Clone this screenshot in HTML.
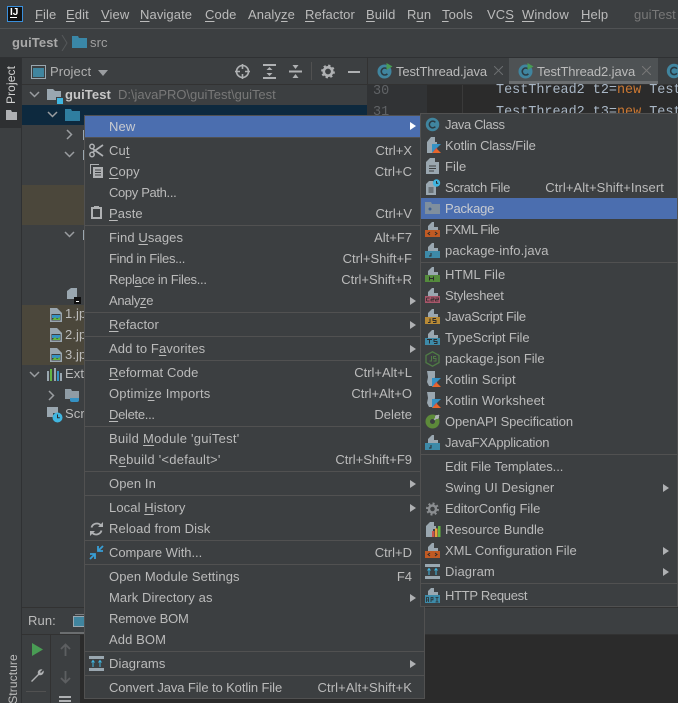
<!DOCTYPE html>
<html><head><meta charset="utf-8">
<style>
html,body{margin:0;padding:0;width:678px;height:703px;overflow:hidden;background:#3c3f41}
body{position:relative;font:13px/20px "Liberation Sans",sans-serif;color:#bbb}
div,span.a,svg{position:absolute}
.t{white-space:nowrap;height:20px;letter-spacing:.1px}
u{text-underline-offset:2px}
.s{left:0;right:0;height:1px;background:#515151}
.menu{background:#3c3f41;border:1px solid #515151;box-sizing:border-box;overflow:hidden}
.k{white-space:nowrap;height:20px;text-align:right;letter-spacing:0}
.ar{width:0;height:0;border-left:6px solid #afb1b3;border-top:4px solid transparent;border-bottom:4px solid transparent}
.v{color:#a9b7c6;font:13.45px/20px "Liberation Mono",monospace;white-space:pre}
.o{color:#cc7832}
.ln{color:#606366;font:13.45px/20px "Liberation Mono",monospace}
.b{font-weight:bold}
</style></head><body>
<svg width="0" height="0" style="position:absolute">
<defs>
<symbol id="cls" viewBox="0 0 16 16"><circle cx="8" cy="8" r="7.2" fill="#40859f"/><path d="M11 5.700A3.600 3.600 0 1 0 11 10.300" fill="none" stroke="#2b3a42" stroke-width="1.600"/></symbol>
<symbol id="tabc" viewBox="0 0 16 16"><circle cx="7.500" cy="8.500" r="7" fill="#40859f"/><path d="M10.400 6.200A3.500 3.500 0 1 0 10.400 10.800" fill="none" stroke="#2b3a42" stroke-width="1.600"/><path d="M9.500 0l6 3.500-6 3.500z" fill="#499c54"/></symbol>
<symbol id="img" viewBox="0 0 16 16"><path d="M2 1h7l5 5v9H2z" fill="#9aa7b0"/><rect x="3.500" y="7" width="9" height="6.500" fill="#3c3f41"/><path d="M4 8h8v3H4z" fill="#3592c4"/><path d="M4 13l3-3 2 2 3-2v3z" fill="#62b543"/></symbol>
<symbol id="kt" viewBox="0 0 9 9"><path d="M0 0h9L4.500 4.500 0 9z" fill="#3592c4"/><path d="M0 9l4.500-4.500L9 9z" fill="#e8662a"/><path d="M2 7l3-3" stroke="#c75450"/></symbol>
<symbol id="top" viewBox="0 0 15 15"><path d="M3 4l4-4h2v5h4v3H3z" fill="#9aa7b0"/></symbol>
</defs></svg>

<!-- top menu bar -->
<div style="left:0;top:28px;width:678px;height:1px;background:#505254"></div>
<div style="left:7px;top:6px;width:14px;height:14px;background:#111;border:1px solid #3a8fdc"></div>
<div class="b" style="left:10px;top:7px;font-size:10px;line-height:11px;color:#fff">IJ</div>
<div style="left:10px;top:17px;width:7px;height:1px;background:#fff"></div>
<div class="t" style="left:35px;top:5px"><u>F</u>ile</div>
<div class="t" style="left:66px;top:5px"><u>E</u>dit</div>
<div class="t" style="left:101px;top:5px"><u>V</u>iew</div>
<div class="t" style="left:140px;top:5px"><u>N</u>avigate</div>
<div class="t" style="left:205px;top:5px"><u>C</u>ode</div>
<div class="t" style="left:248px;top:5px">Analy<u>z</u>e</div>
<div class="t" style="left:305px;top:5px"><u>R</u>efactor</div>
<div class="t" style="left:366px;top:5px"><u>B</u>uild</div>
<div class="t" style="left:407px;top:5px">R<u>u</u>n</div>
<div class="t" style="left:442px;top:5px"><u>T</u>ools</div>
<div class="t" style="left:487px;top:5px">VC<u>S</u></div>
<div class="t" style="left:522px;top:5px"><u>W</u>indow</div>
<div class="t" style="left:581px;top:5px"><u>H</u>elp</div>
<div class="t" style="left:634px;top:5px;color:#787878">guiTest</div>

<!-- nav bar -->
<div class="t b" style="left:12px;top:33px;color:#a9a9a9">guiTest</div>
<svg style="left:61px;top:35px" width="8" height="16"><path d="M1 0l5 8-5 8" fill="none" stroke="#55585a"/></svg>
<svg style="left:72px;top:36px" width="15" height="13"><path d="M0 0h6l1 2h8v10H0z" fill="#3a87a7"/></svg>
<div class="t" style="left:90px;top:33px;color:#a0a0a0">src</div>
<div style="left:0;top:57px;width:678px;height:1px;background:#2f3133"></div>

<!-- left stripe -->
<div style="left:0;top:58px;width:22px;height:70px;background:#2e3032"></div>
<div style="left:21px;top:58px;width:1px;height:645px;background:#2f3133"></div>
<div class="t" style="left:-12px;top:75px;width:46px;text-align:center;transform:rotate(-90deg);color:#d0d0d0;font-size:12px">Project</div>
<svg style="left:6px;top:110px" width="12" height="10"><path d="M0 0h5l1 2h5v8H0z" fill="#afb1b3"/></svg>
<div class="t" style="left:-17px;top:669px;width:60px;text-align:center;transform:rotate(-90deg);font-size:12px;color:#bbb">Structure</div>

<!-- project header -->
<svg style="left:31px;top:65px" width="15" height="14"><rect x=".5" y=".5" width="14" height="13" fill="none" stroke="#9aa7b0"/><rect x="2" y="3" width="11" height="9" fill="#40859f"/></svg>
<div class="t" style="left:50px;top:62px;color:#b0b0b0">Project</div>
<svg style="left:98px;top:70px" width="10" height="6"><path d="M0 0h10L5 6z" fill="#9a9da0"/></svg>
<svg style="left:235px;top:64px" width="15" height="15"><circle cx="7.500" cy="7.500" r="6" fill="none" stroke="#afb1b3" stroke-width="1.600"/><path d="M7.500 0v5M7.500 10v5M0 7.500h5M10 7.500h5" stroke="#afb1b3" stroke-width="1.600"/></svg>
<svg style="left:263px;top:64px" width="13" height="15"><path d="M0 1h13M0 14h13" stroke="#afb1b3" stroke-width="2"/><path d="M6.500 3l3 3h-6zM6.500 12l3-3h-6z" fill="#afb1b3"/></svg>
<svg style="left:289px;top:64px" width="13" height="15"><path d="M0 7.500h13" stroke="#afb1b3" stroke-width="2"/><path d="M3.500 1h6l-3 4zM3.500 14h6l-3-4z" fill="#afb1b3"/></svg>
<div style="left:311px;top:62px;width:1px;height:18px;background:#515151"></div>
<svg style="left:321px;top:64px" width="14" height="15"><circle cx="7" cy="7.500" r="4.200" fill="none" stroke="#afb1b3" stroke-width="2.600"/><circle cx="7" cy="7.500" r="6" fill="none" stroke="#afb1b3" stroke-width="1.800" stroke-dasharray="2.300 2.400"/></svg>
<div style="left:348px;top:71px;width:12px;height:2px;background:#afb1b3"></div>
<div style="left:22px;top:84px;width:345px;height:1px;background:#323232"></div>
<div style="left:367px;top:58px;width:1px;height:27px;background:#323232"></div>

<!-- tabs -->
<div style="left:509px;top:58px;width:149px;height:27px;background:#4e5254"></div>
<div style="left:509px;top:81px;width:149px;height:3px;background:#6b6e70"></div>
<svg style="left:377px;top:63px" width="16" height="16"><use href="#tabc"/></svg>
<div class="t" style="left:396px;top:62px;letter-spacing:-.1px">TestThread.java</div>
<svg style="left:494px;top:66px" width="9" height="9"><path d="M0 0l9 9M9 0L0 9" stroke="#6b6e70"/></svg>
<svg style="left:518px;top:63px" width="16" height="16"><use href="#tabc"/></svg>
<div class="t" style="left:537px;top:62px;letter-spacing:-.1px">TestThread2.java</div>
<svg style="left:642px;top:66px" width="9" height="9"><path d="M0 0l9 9M9 0L0 9" stroke="#777"/></svg>
<svg style="left:666px;top:63px" width="16" height="16"><use href="#cls"/></svg>
<div style="left:367px;top:84px;width:311px;height:1px;background:#323232"></div>

<!-- editor -->
<div style="left:367px;top:85px;width:60px;height:30px;background:#313335"></div>
<div style="left:427px;top:85px;width:251px;height:30px;background:#2b2b2b"></div>
<div style="left:462px;top:85px;width:1px;height:30px;background:#3a3a3a"></div>
<div class="ln" style="left:373px;top:82px">30</div>
<div class="ln" style="left:373px;top:103px">31</div>
<div class="v" style="left:496px;top:81px">TestThread2 t2=<span class="o">new</span> Test</div>
<div class="v" style="left:496px;top:103px">TestThread2 t3=<span class="o">new</span> Test</div>

<!-- tree -->
<svg style="left:29px;top:91px" width="11" height="7"><path d="M1 1l4.500 4.500L10 1" fill="none" stroke="#9a9da0" stroke-width="1.500"/></svg>
<svg style="left:47px;top:89px" width="16" height="15"><path d="M0 0h6l2 2h6v9H0z" fill="#9aa7b0"/><rect x="9" y="8" width="7" height="7" fill="#3c3f41"/><rect x="10" y="9" width="6" height="6" fill="#40b6e0"/></svg>
<div class="t b" style="left:65px;top:85px;color:#c8c8c8">guiTest</div>
<div class="t" style="left:118px;top:85px;color:#787878;letter-spacing:-.02px">D:\javaPRO\guiTest\guiTest</div>

<div style="left:22px;top:105px;width:345px;height:20px;background:#0d293e"></div>
<svg style="left:47px;top:111px" width="11" height="7"><path d="M1 1l4.500 4.500L10 1" fill="none" stroke="#9a9da0" stroke-width="1.500"/></svg>
<svg style="left:65px;top:109px" width="15" height="12"><path d="M0 0h6l1 2h8v10H0z" fill="#2f7ea0"/></svg>

<svg style="left:66px;top:129px" width="7" height="11"><path d="M1 1l4.500 4.500L1 10" fill="none" stroke="#9a9da0" stroke-width="1.500"/></svg>
<svg style="left:64px;top:151px" width="11" height="7"><path d="M1 1l4.500 4.500L10 1" fill="none" stroke="#9a9da0" stroke-width="1.500"/></svg>
<svg style="left:64px;top:231px" width="11" height="7"><path d="M1 1l4.500 4.500L10 1" fill="none" stroke="#9a9da0" stroke-width="1.500"/></svg>
<div style="left:83px;top:130px;width:1px;height:10px;background:#9aa7b0"></div>
<div style="left:83px;top:150px;width:1px;height:10px;background:#9aa7b0"></div>
<div style="left:83px;top:230px;width:1px;height:10px;background:#9aa7b0"></div>

<div style="left:22px;top:185px;width:62px;height:40px;background:#4b473b"></div>
<div style="left:22px;top:305px;width:62px;height:60px;background:#4b473b"></div>

<svg style="left:67px;top:288px" width="14" height="16"><path d="M0 3l4-3h6v11H0z" fill="#9aa7b0"/><rect x="7" y="9" width="7" height="7" fill="#111"/><rect x="9" y="13" width="3" height="1" fill="#fff"/></svg>
<svg style="left:48px;top:307px" width="16" height="16"><use href="#img"/></svg>
<svg style="left:48px;top:327px" width="16" height="16"><use href="#img"/></svg>
<svg style="left:48px;top:347px" width="16" height="16"><use href="#img"/></svg>
<div class="t" style="left:65px;top:304px">1.jpg</div>
<div class="t" style="left:65px;top:325px">2.jpg</div>
<div class="t" style="left:65px;top:345px">3.jpg</div>
<svg style="left:29px;top:371px" width="11" height="7"><path d="M1 1l4.500 4.500L10 1" fill="none" stroke="#9a9da0" stroke-width="1.500"/></svg>
<svg style="left:47px;top:368px" width="15" height="13"><rect x="0" y="3" width="2" height="10" fill="#9aa7b0"/><rect x="3" y="1" width="2" height="12" fill="#62b543"/><rect x="7" y="0" width="2" height="13" fill="#9aa7b0"/><rect x="10" y="3" width="2" height="10" fill="#3592c4"/><rect x="13" y="5" width="2" height="8" fill="#9aa7b0"/></svg>
<div class="t" style="left:65px;top:364px">External Libraries</div>
<svg style="left:48px;top:390px" width="7" height="11"><path d="M1 1l4.500 4.500L1 10" fill="none" stroke="#9a9da0" stroke-width="1.500"/></svg>
<svg style="left:65px;top:389px" width="16" height="14"><path d="M0 0h6l1 2h7v8H0z" fill="#8f9ca5"/><path d="M5 9h9v2a2 2 0 0 1-2 2H7a2 2 0 0 1-2-2z" fill="#3592c4"/></svg>
<svg style="left:47px;top:407px" width="16" height="16"><path d="M0 0h11v6H6v4H0z" fill="#9aa7b0"/><circle cx="10.500" cy="10.500" r="5" fill="#40b6e0"/><path d="M10.500 7.500v3.300h2.300" fill="none" stroke="#2b2b2b"/></svg>
<div class="t" style="left:65px;top:404px">Scratches</div>

<!-- run panel -->
<div style="left:22px;top:607px;width:656px;height:1px;background:#323232"></div>
<div class="t" style="left:28px;top:611px">Run:</div>
<svg style="left:73px;top:614px" width="13" height="14"><path d="M2 0h9v1H2z" fill="#7a7d80"/><rect x=".5" y="2.500" width="11" height="10" fill="#40859f" stroke="#9aa7b0"/></svg>
<div style="left:60px;top:632px;width:26px;height:3px;background:#6b6e70"></div>
<div style="left:22px;top:634px;width:656px;height:1px;background:#323232"></div>
<div style="left:50px;top:635px;width:1px;height:68px;background:#323232"></div>
<div style="left:80px;top:635px;width:598px;height:68px;background:#2b2b2b"></div>
<svg style="left:32px;top:643px" width="11" height="13"><path d="M0 0l11 6.500L0 13z" fill="#499c54"/></svg>
<svg style="left:29px;top:668px" width="15" height="15"><path d="M2 13L9 6a3.500 3.500 0 0 1 4.500-4.500L11 4l1 1 2.500-2.500A3.500 3.500 0 0 1 10 7l-7 7z" fill="#afb1b3"/></svg>
<svg style="left:60px;top:643px" width="11" height="14"><path d="M5.500 13V2M1 6l4.500-4.500L10 6" fill="none" stroke="#5d5f61" stroke-width="1.800"/></svg>
<svg style="left:60px;top:670px" width="11" height="14"><path d="M5.500 1v11M1 8l4.500 4.500L10 8" fill="none" stroke="#5d5f61" stroke-width="1.800"/></svg>
<div style="left:26px;top:691px;width:20px;height:1px;background:#515151"></div>
<div style="left:59px;top:696px;width:12px;height:2px;background:#afb1b3"></div>
<div style="left:59px;top:700px;width:12px;height:2px;background:#afb1b3"></div>

<!-- main context menu -->
<div class="menu" style="left:84px;top:115px;width:341px;height:584px">
  <div style="left:0;top:0;width:339px;height:21px;background:#4b6eaf"></div>
</div>
<div style="left:85px;top:115px;width:339px;height:583px">
  <div class="t" style="left:24px;top:2px;color:#c8cbd0">New</div>
  <div class="ar" style="left:325px;top:7px;border-left-color:#fff"></div>
  <div class="s" style="top:22px"></div>
  <svg style="left:4px;top:28px" width="15" height="15"><path d="M4 6l10 7M4 9l10-7" stroke="#afb1b3" stroke-width="1.700"/><circle cx="3" cy="3.500" r="2.200" fill="none" stroke="#afb1b3" stroke-width="1.500"/><circle cx="3" cy="11.500" r="2.200" fill="none" stroke="#afb1b3" stroke-width="1.500"/></svg>
  <div class="t" style="left:24px;top:26px">Cu<u>t</u></div><div class="k" style="right:12px;top:26px">Ctrl+X</div>
  <svg style="left:5px;top:49px" width="13" height="14"><path d="M0 0h9v1H1v9H0z" fill="#afb1b3"/><rect x="3" y="3" width="10" height="11" fill="#afb1b3"/><path d="M5 6h6M5 8.500h6M5 11h6" stroke="#3c3f41"/></svg>
  <div class="t" style="left:24px;top:47px"><u>C</u>opy</div><div class="k" style="right:12px;top:47px">Ctrl+C</div>
  <div class="t" style="left:24px;top:68px;letter-spacing:-.35px">Copy Path...</div>
  <svg style="left:6px;top:91px" width="11" height="13"><rect x="1" y="2" width="9" height="10" fill="none" stroke="#afb1b3" stroke-width="2"/><rect x="3" y="0" width="5" height="3" fill="#afb1b3"/></svg>
  <div class="t" style="left:24px;top:89px"><u>P</u>aste</div><div class="k" style="right:12px;top:89px">Ctrl+V</div>
  <div class="s" style="top:110px"></div>
  <div class="t" style="left:24px;top:113px">Find <u>U</u>sages</div><div class="k" style="right:12px;top:113px">Alt+F7</div>
  <div class="t" style="left:24px;top:134px;letter-spacing:-.3px">Find in Files...</div><div class="k" style="right:12px;top:134px">Ctrl+Shift+F</div>
  <div class="t" style="left:24px;top:155px;letter-spacing:-.3px">Repl<u>a</u>ce in Files...</div><div class="k" style="right:12px;top:155px">Ctrl+Shift+R</div>
  <div class="t" style="left:24px;top:176px;letter-spacing:-.3px">Analy<u>z</u>e</div><div class="ar" style="left:325px;top:182px"></div>
  <div class="s" style="top:197px"></div>
  <div class="t" style="left:24px;top:200px"><u>R</u>efactor</div><div class="ar" style="left:325px;top:206px"></div>
  <div class="s" style="top:221px"></div>
  <div class="t" style="left:24px;top:224px">Add to F<u>a</u>vorites</div><div class="ar" style="left:325px;top:230px"></div>
  <div class="s" style="top:245px"></div>
  <div class="t" style="left:24px;top:248px"><u>R</u>eformat Code</div><div class="k" style="right:12px;top:248px">Ctrl+Alt+L</div>
  <div class="t" style="left:24px;top:269px;letter-spacing:.2px">Optimi<u>z</u>e Imports</div><div class="k" style="right:12px;top:269px">Ctrl+Alt+O</div>
  <div class="t" style="left:24px;top:290px;letter-spacing:-.3px"><u>D</u>elete...</div><div class="k" style="right:12px;top:290px">Delete</div>
  <div class="s" style="top:311px"></div>
  <div class="t" style="left:24px;top:314px;letter-spacing:.25px">Build <u>M</u>odule 'guiTest'</div>
  <div class="t" style="left:24px;top:335px;letter-spacing:.25px">R<u>e</u>build '&lt;default&gt;'</div><div class="k" style="right:12px;top:335px">Ctrl+Shift+F9</div>
  <div class="s" style="top:356px"></div>
  <div class="t" style="left:24px;top:359px">Open In</div><div class="ar" style="left:325px;top:365px"></div>
  <div class="s" style="top:380px"></div>
  <div class="t" style="left:24px;top:383px">Local <u>H</u>istory</div><div class="ar" style="left:325px;top:389px"></div>
  <svg style="left:5px;top:407px" width="13" height="14"><path d="M1.500 5.500A5.500 5.500 0 0 1 11 3.500M11.500 8.500A5.500 5.500 0 0 1 2 10.500" fill="none" stroke="#afb1b3" stroke-width="1.800"/><path d="M8 5h5V0zM5 9H0v5z" fill="#afb1b3"/></svg>
  <div class="t" style="left:24px;top:404px">Reload from Disk</div>
  <div class="s" style="top:425px"></div>
  <svg style="left:4px;top:430px" width="15" height="15"><path d="M9 1v5h5M9 6l5-5M6 14V9H1M6 9l-5 5" fill="none" stroke="#389fd6" stroke-width="1.800"/></svg>
  <div class="t" style="left:24px;top:428px;letter-spacing:-.05px">Compare With...</div><div class="k" style="right:12px;top:428px">Ctrl+D</div>
  <div class="s" style="top:449px"></div>
  <div class="t" style="left:24px;top:452px">Open Module Settings</div><div class="k" style="right:12px;top:452px">F4</div>
  <div class="t" style="left:24px;top:473px">Mark Directory as</div><div class="ar" style="left:325px;top:479px"></div>
  <div class="t" style="left:24px;top:494px;letter-spacing:-.2px">Remove BOM</div>
  <div class="t" style="left:24px;top:515px">Add BOM</div>
  <div class="s" style="top:536px"></div>
  <svg style="left:4px;top:541px" width="15" height="15"><path d="M0 0h15v3H0zM0 12h15v3H0z" fill="#9aa7b0"/><path d="M4 11V5M11 11V5M2.500 6.500L4 4.500l1.500 2M9.500 6.500L11 4.500l1.500 2" fill="none" stroke="#40b6e0"/></svg>
  <div class="t" style="left:24px;top:539px">Diagrams</div><div class="ar" style="left:325px;top:545px"></div>
  <div class="s" style="top:560px"></div>
  <div class="t" style="left:24px;top:563px;letter-spacing:-.1px">Convert Java File to Kotlin File</div><div class="k" style="right:12px;top:563px;letter-spacing:.1px">Ctrl+Alt+Shift+K</div>
</div>

<!-- submenu -->
<div class="menu" style="left:420px;top:113px;width:258px;height:494px"></div>
<div style="left:421px;top:198px;width:256px;height:21px;background:#4b6eaf"></div>
<div style="left:421px;top:114px;width:256px;height:492px">
  <svg style="left:4px;top:3px" width="15" height="15"><use href="#cls"/></svg>
  <div class="t" style="left:24px;top:1px;letter-spacing:-.4px">Java Class</div>
  <svg style="left:6px;top:23px" width="13" height="16"><path d="M0 5l4-5h4v5h2v3H6v8H0z" fill="#9aa7b0"/></svg>
  <svg style="left:11px;top:30px" width="9" height="9"><use href="#kt"/></svg>
  <div class="t" style="left:24px;top:22px;letter-spacing:-.15px">Kotlin Class/File</div>
  <svg style="left:5px;top:44px" width="13" height="16"><path d="M0 4l4-4h5v4h4v12H0z" fill="#9aa7b0"/><path d="M3 8h7M3 10.500h7M3 13h5" stroke="#3c3f41"/></svg>
  <div class="t" style="left:24px;top:43px">File</div>
  <svg style="left:5px;top:65px" width="15" height="16"><path d="M0 5l3-3h4v3h3v11H0z" fill="#9aa7b0"/><path d="M2.500 9h5M2.500 11h5M2.500 13h5" stroke="#3c3f41"/><circle cx="10.500" cy="4" r="3.700" fill="#40b6e0"/><path d="M10.500 2v2.200h1.800" fill="none" stroke="#2b2b2b"/></svg>
  <div class="t" style="left:24px;top:64px;letter-spacing:-.3px">Scratch File</div><div class="k" style="right:13px;top:64px;letter-spacing:.1px">Ctrl+Alt+Shift+Insert</div>
  <svg style="left:4px;top:88px" width="15" height="12"><path d="M0 0h6l1 2h8v10H0z" fill="#7f8f9e"/><circle cx="5" cy="7" r="1.500" fill="#3f5f8f"/></svg>
  <div class="t" style="left:24px;top:85px;color:#c8cbd0;letter-spacing:-.2px">Package</div>
  <svg style="left:4px;top:108px" width="15" height="15"><use href="#top"/><rect x="0" y="8" width="15" height="7" fill="#c05a24"/><path d="M5 10l-2 1.500L5 13M10 10l2 1.500L10 13" fill="none" stroke="#2b2b2b"/></svg>
  <div class="t" style="left:24px;top:106px;letter-spacing:-.5px">FXML File</div>
  <svg style="left:4px;top:129px" width="15" height="15"><use href="#top"/><rect x="0" y="8" width="15" height="7" fill="#3d8aa8"/><path d="M6 10v3H4" fill="none" stroke="#2b2b2b"/></svg>
  <div class="t" style="left:24px;top:127px">package-info.java</div>
  <div class="s" style="top:148px"></div>
  <svg style="left:4px;top:153px" width="15" height="15"><use href="#top"/><rect x="0" y="8" width="15" height="7" fill="#548b3c"/><path d="M4.500 9.500v4M8.500 9.500v4M4.500 11.500h4" stroke="#2b2b2b"/></svg>
  <div class="t" style="left:24px;top:151px">HTML File</div>
  <svg style="left:4px;top:174px" width="15" height="15"><use href="#top"/><rect x="0" y="8" width="15" height="7" fill="#a8566a"/><path d="M1.500 10h3M1.500 13h3M1.500 10v3M6 10h3v1.500H6V13h3M10.500 10h3v1.500h-3V13h3" fill="none" stroke="#2b2b2b" stroke-width=".8"/></svg>
  <div class="t" style="left:24px;top:172px;letter-spacing:-.2px">Stylesheet</div>
  <svg style="left:4px;top:195px" width="15" height="15"><use href="#top"/><rect x="0" y="8" width="15" height="7" fill="#b88a35"/><path d="M5 9.500v4H3M11 9.500H8v2h3v2H8" fill="none" stroke="#2b2b2b"/></svg>
  <div class="t" style="left:24px;top:193px;letter-spacing:-.3px">JavaScript File</div>
  <svg style="left:4px;top:216px" width="15" height="15"><use href="#top"/><rect x="0" y="8" width="15" height="7" fill="#3d8aa8"/><path d="M2 9.500h5M4.500 9.500v4M12 9.500H9v2h3v2H9" fill="none" stroke="#2b2b2b"/></svg>
  <div class="t" style="left:24px;top:214px;letter-spacing:-.1px">TypeScript File</div>
  <svg style="left:4px;top:237px" width="15" height="16"><path d="M7.500 .8l6.500 3.600v7.200l-6.500 3.600L1 11.600V4.400z" fill="none" stroke="#4f7b45" stroke-width="1.300"/><path d="M6.500 5v5l-2 0M11 5.500H8.500v2h2.500v2.500H8.500" fill="none" stroke="#4f7b45"/></svg>
  <div class="t" style="left:24px;top:235px;letter-spacing:-.1px">package.json File</div>
  <svg style="left:5px;top:257px" width="15" height="16"><path d="M1 0h8v6l-1 5 2 4H3l-2-4 1-5z" fill="#9aa7b0"/></svg>
  <svg style="left:11px;top:264px" width="9" height="9"><use href="#kt"/></svg>
  <div class="t" style="left:24px;top:256px">Kotlin Script</div>
  <svg style="left:5px;top:278px" width="15" height="16"><path d="M1 0h8v6l-1 5 2 4H3l-2-4 1-5z" fill="#9aa7b0"/></svg>
  <svg style="left:11px;top:285px" width="9" height="9"><use href="#kt"/></svg>
  <div class="t" style="left:24px;top:277px">Kotlin Worksheet</div>
  <svg style="left:4px;top:300px" width="15" height="15"><circle cx="7.500" cy="7.500" r="7" fill="#5d8a3a"/><path d="M7.500 7.500L14 1" stroke="#b0b4b8" stroke-width="1.500"/><circle cx="7.500" cy="7.500" r="2.500" fill="#3c3f41"/><circle cx="12" cy="3" r="2" fill="#b0b4b8"/></svg>
  <div class="t" style="left:24px;top:298px;letter-spacing:-.1px">OpenAPI Specification</div>
  <svg style="left:4px;top:321px" width="15" height="15"><use href="#top"/><rect x="0" y="8" width="15" height="7" fill="#3d8aa8"/><path d="M6 10v3H4" fill="none" stroke="#2b2b2b"/></svg>
  <div class="t" style="left:24px;top:319px;letter-spacing:-.2px">JavaFXApplication</div>
  <div class="s" style="top:340px"></div>
  <div class="t" style="left:24px;top:343px;letter-spacing:-.1px">Edit File Templates...</div>
  <div class="t" style="left:24px;top:364px">Swing UI Designer</div><div class="ar" style="left:242px;top:370px"></div>
  <svg style="left:5px;top:388px" width="13" height="14"><circle cx="6.500" cy="7" r="3.500" fill="none" stroke="#8a8d90" stroke-width="2.500"/><circle cx="6.500" cy="7" r="5.500" fill="none" stroke="#8a8d90" stroke-width="2" stroke-dasharray="2 2.300"/></svg>
  <div class="t" style="left:24px;top:385px;letter-spacing:-.05px">EditorConfig File</div>
  <svg style="left:5px;top:407px" width="15" height="16"><path d="M0 5l4-4h4v4h2v3H7v8H0z" fill="#9aa7b0"/><rect x="6" y="10" width="2.500" height="6" fill="#c75450"/><rect x="9" y="7.500" width="2.500" height="8.500" fill="#e9a23a"/><rect x="12" y="5" width="2.500" height="11" fill="#62b543"/></svg>
  <div class="t" style="left:24px;top:406px;letter-spacing:-.05px">Resource Bundle</div>
  <svg style="left:4px;top:429px" width="15" height="15"><use href="#top"/><rect x="0" y="8" width="15" height="7" fill="#c05a24"/><path d="M5 10l-2 1.500L5 13M10 10l2 1.500L10 13" fill="none" stroke="#2b2b2b"/></svg>
  <div class="t" style="left:24px;top:427px;letter-spacing:-.0px">XML Configuration File</div><div class="ar" style="left:242px;top:433px"></div>
  <svg style="left:4px;top:450px" width="15" height="15"><path d="M0 0h15v3H0zM0 12h15v3H0z" fill="#9aa7b0"/><path d="M4 11V5M11 11V5M2.500 6.500L4 4.500l1.500 2M9.500 6.500L11 4.500l1.500 2" fill="none" stroke="#40b6e0"/></svg>
  <div class="t" style="left:24px;top:448px">Diagram</div><div class="ar" style="left:242px;top:454px"></div>
  <div class="s" style="top:469px"></div>
  <svg style="left:4px;top:474px" width="15" height="15"><path d="M3 3l3-3h3v4h4v3H3z" fill="#9aa7b0"/><rect x="0" y="7" width="15" height="8" fill="#3d8aa8"/><path d="M1.500 14v-4.500h2V14M1.500 12h2M6 14V9.500h2v2.300H6M10.500 9.500h3M12 9.500V14M10.500 14h3" fill="none" stroke="#2b2b2b" stroke-width=".8"/></svg>
  <div class="t" style="left:24px;top:472px;letter-spacing:-.3px">HTTP Request</div>
</div>
</body></html>
